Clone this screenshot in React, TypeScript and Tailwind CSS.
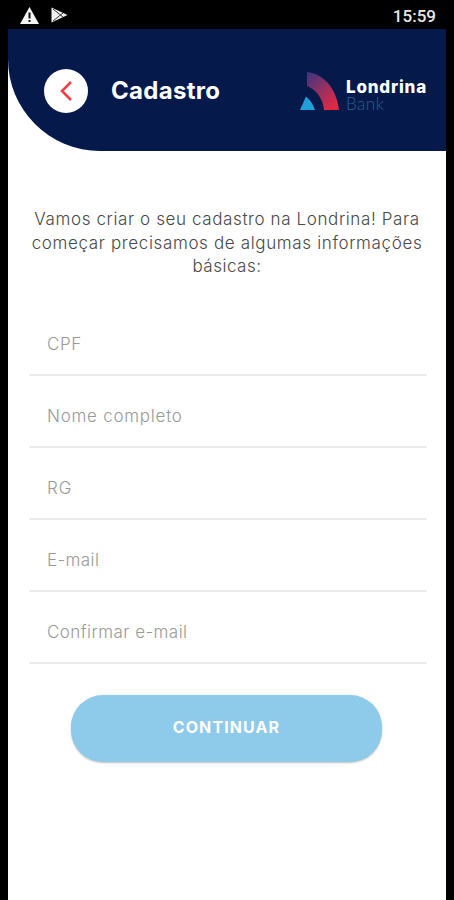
import React from "react";

const fields = [
  { label: "CPF", style: "tracking-[0.6px]" },
  { label: "Nome completo", style: "tracking-[0.75px]" },
  { label: "RG", style: "tracking-[1px]" },
  { label: "E-mail", style: "tracking-[0.4px]" },
  { label: "Confirmar e-mail", style: "tracking-[0.45px]" },
];

function StatusBar() {
  return (
    <div className="flex h-[29px] items-center justify-between pl-5 pr-[18px]">
      <div className="flex items-center gap-3 pt-[1px]">
        <svg width="19" height="17" viewBox="0 0 19 17">
          <path d="M9.5 0 19 17H0Z" fill="#f4f4f4" />
          <path d="M9.5 5.5v6M9.5 13v2" stroke="#111" strokeWidth="2" />
        </svg>
        <svg width="17" height="16" viewBox="0 0 17 16">
          <path d="M0.5 0.5 16.5 8 0.5 15.5Z" fill="#f0f0f0" />
          <path d="M2 2 12 10M2 14 12 6" fill="none" stroke="#333" strokeWidth="1" />
        </svg>
      </div>
      <span className="pt-[3px] font-[Roboto,sans-serif] text-[17px] font-medium leading-none text-[#e8e8e8]">15:59</span>
    </div>
  );
}

function Logo() {
  return (
    <div className="flex items-start">
      <svg width="40" height="39" viewBox="0 0 40 39">
        <defs>
          <linearGradient id="arc" x1="0.05" y1="0" x2="0.9" y2="1">
            <stop offset="0" stopColor="#3d3480" />
            <stop offset="0.5" stopColor="#98305f" />
            <stop offset="0.9" stopColor="#dd2a44" />
          </linearGradient>
        </defs>
        <path d="M7 0C25 2 37 18 39 38H24C23 27 17 18 7 14Z" fill="url(#arc)" />
        <path d="M6 24.500C10 28 13 32 15 38H0Z" fill="#209fda" />
      </svg>
      <div className="ml-[6px] mt-[6px]">
        <div className="h-[17px] whitespace-nowrap font-[Inter,sans-serif] text-[17px] font-extrabold leading-[18px] tracking-[0.8px] text-white">Londrina</div>
        <div className="h-[16px] font-[Lato,sans-serif] text-[17px] font-light leading-[18px] tracking-[0.5px] text-[#2b628d]">Bank</div>
      </div>
    </div>
  );
}

export default function App() {
  return (
    <div className="h-[900px] w-[454px] overflow-hidden bg-black">
      <StatusBar />
      <main className="ml-2 h-[871px] w-[438px] bg-white">
        <header className="flex h-[122px] items-start rounded-bl-[92px] bg-[#05194b] pl-9">
          <button className="mt-10 flex size-11 items-center justify-center rounded-full bg-white" aria-label="Voltar">
            <svg width="12" height="20" viewBox="0 0 12 20" fill="none" stroke="#ee4046" strokeWidth="2.6">
              <path d="M11 1 2 10l9 9" />
            </svg>
          </button>
          <h1 className="ml-[23px] mt-[47px] w-[189px] font-[Inter,sans-serif] text-[24px] font-bold leading-[30px] tracking-[0.3px] text-white">Cadastro</h1>
          <div className="mt-[43px]">
            <Logo />
          </div>
        </header>
        <div className="pt-[57px] text-center font-[Inter,sans-serif] text-[17px] font-light leading-[23.5px] text-[#484848]">
          <p className="whitespace-nowrap tracking-[0.61px]">Vamos criar o seu cadastro na Londrina! Para</p>
          <p className="whitespace-nowrap tracking-[0.64px]">começar precisamos de algumas informações</p>
          <p className="tracking-[0.5px]">básicas:</p>
        </div>
        <form className="mx-[21px] mt-[25px] w-[398px] font-[Inter,sans-serif]">
          {fields.map((f) => (
            <div key={f.label} className="flex h-[72px] items-center border-b-2 border-[#ebebeb] pl-[18px] pt-[13px] text-[17px] font-light text-[#999]">
              <span className={f.style}>{f.label}</span>
            </div>
          ))}
        </form>
        <button className="ml-[63px] mt-[31px] flex h-[67px] w-[311px] items-center justify-center rounded-[32px] bg-[#8ecaea] pb-[3px] font-[Inter,sans-serif] text-[16px] font-bold tracking-[1.1px] text-white shadow-[0_1px_2px_rgba(0,0,0,0.25)]">
          CONTINUAR
        </button>
      </main>
    </div>
  );
}
